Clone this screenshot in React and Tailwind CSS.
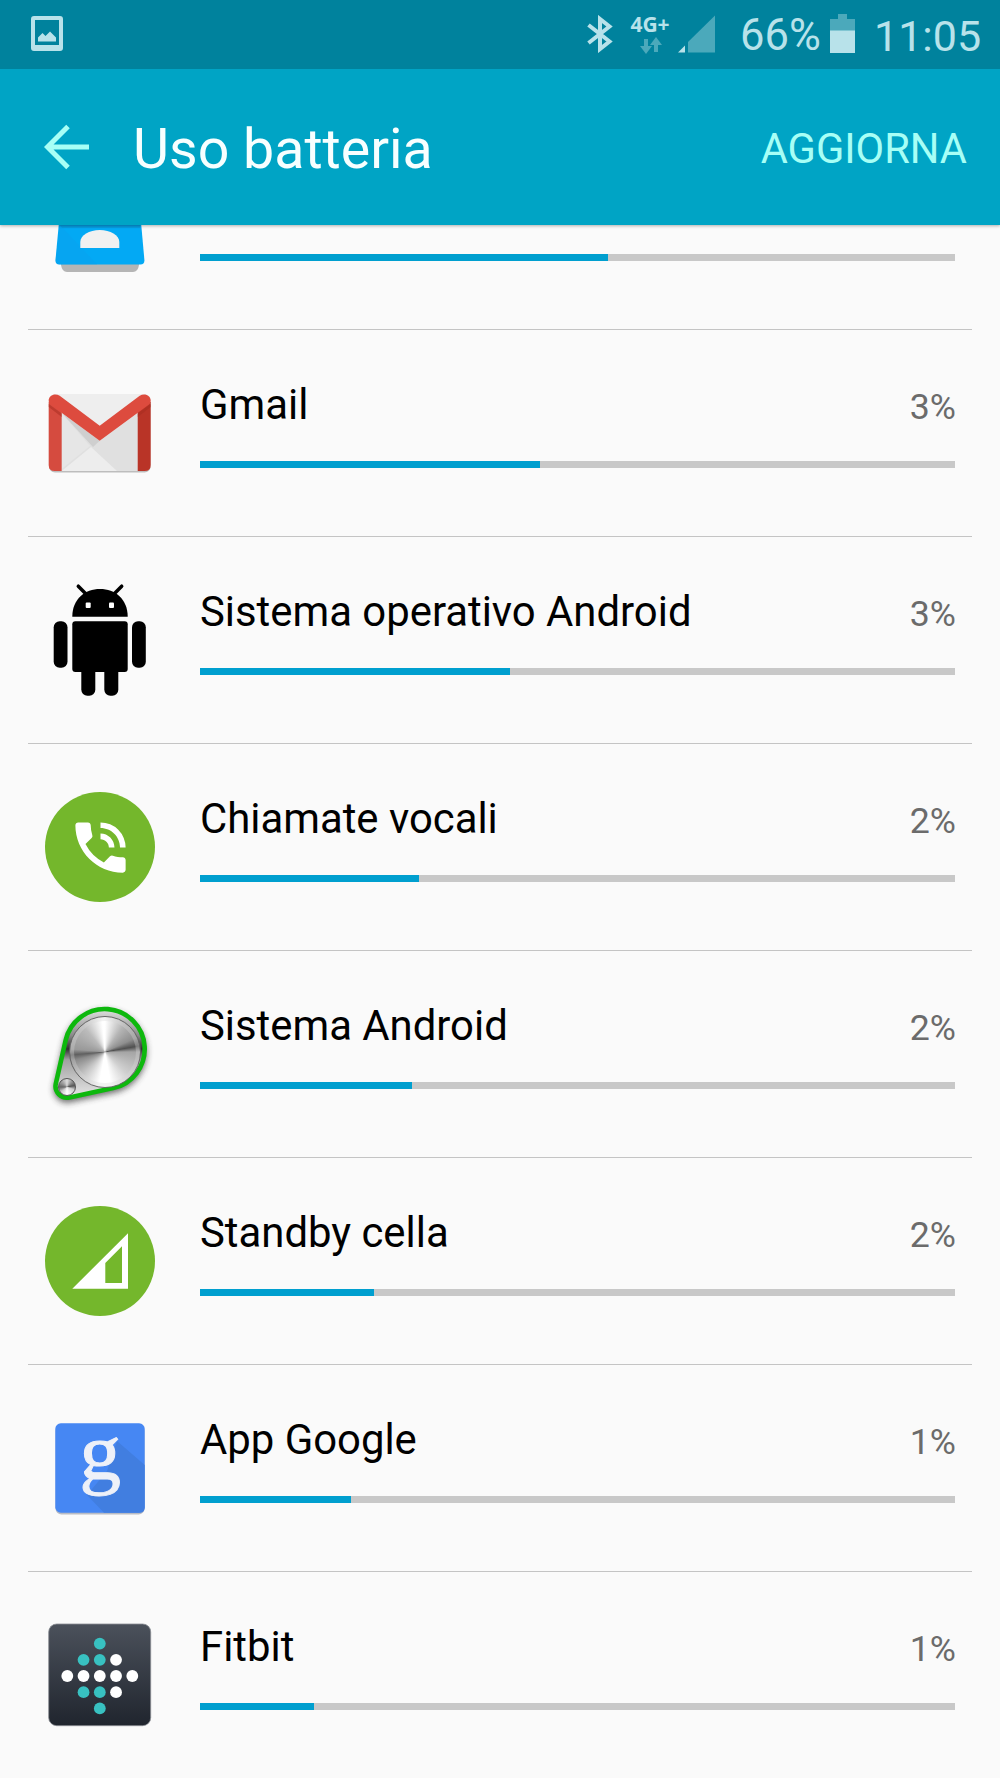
import { MdPhoneInTalk } from 'react-icons/md'

const APPS = [
  { name: '', percent: '', width: 408, Icon: ContactsIcon },
  { name: 'Gmail', percent: '3%', width: 340, Icon: GmailIcon },
  { name: 'Sistema operativo Android', percent: '3%', width: 310, Icon: AndroidIcon },
  { name: 'Chiamate vocali', percent: '2%', width: 219, Icon: CallsIcon },
  { name: 'Sistema Android', percent: '2%', width: 212, Icon: SystemIcon },
  { name: 'Standby cella', percent: '2%', width: 174, Icon: CellIcon },
  { name: 'App Google', percent: '1%', width: 151, Icon: GoogleIcon },
  { name: 'Fitbit', percent: '1%', width: 114, Icon: FitbitIcon },
]

const ICON = 'size-[110px] shrink-0 overflow-visible'

function ContactsIcon() {
  return (
    <svg viewBox="0 0 110 110" className={ICON}>
      <path d="M16 90h78v4q-1 7-6 7H22q-5 0-6-7z" fill="#b5b5b5" />
      <path d="M15 40h80l4.4 49q.3 4.5-4 4.5H14.5q-4.3 0-4-4.5z" fill="#03a9f4" />
      <path d="M15 54L52 93.5H14.5q-4.3 0-4-4.5z" fill="#0e9cec" opacity="0.3" />
      <path d="M15 54H95V57H17z" fill="#0b8fd0" opacity="0.5" />
      <path d="M35.3 77V71c0-7 9-12 19.5-12s19.5 5 19.5 12v6z" fill="#f1f1f1" />
    </svg>
  )
}

function GmailIcon() {
  return (
    <svg viewBox="0 0 110 110" className={ICON}>
      <rect x="4" y="18" width="101.5" height="76.5" rx="6" fill="#bdbdbd" />
      <rect x="3.7" y="16" width="102" height="77" rx="6" fill="#eeeeee" />
      <path d="M16.7 35L54.7 62.7 92.7 35V93H16.7z" fill="#e0e0e0" />
      <path d="M16.7 35L45 68 16.7 91z" fill="#e6e6e6" />
      <path d="M16.7 93L46 69 72 93z" fill="#ededed" />
      <path d="M16.7 35L48 69 54.7 62.7z" fill="#cfcfcf" />
      <path d="M3.7 24H16.7V93H9.7q-6 0-6-6z" fill="#d54b3f" />
      <path d="M92.7 24h13V87q0 6-6 6h-7z" fill="#b93427" />
      <path d="M3.7 26l13 9.5v3.5L3.7 29zM105.7 26l-13 9.5v3.5l13-10z" fill="#a52c20" opacity="0.5" />
      <path d="M3.7 22.5c0-5 6-8 11-4.8L54.7 47.7 94.7 17.7c5-3.2 11-.2 11 4.8 0 2-.8 3.3-2 4.3L54.7 62.7 5.7 26.8c-1.2-1-2-2.3-2-4.3z" fill="#dd4b3e" />
    </svg>
  )
}

function AndroidIcon() {
  return (
    <svg viewBox="0 0 110 110" className={ICON}>
      <path d="M33.3 1.2L41 9M76.7 1.2L69 9" stroke="#000" strokeWidth="3.5" strokeLinecap="round" />
      <path d="M27.3 31.7C27.3 14 40 4 55 4s27.7 10 27.7 27.7z" />
      <rect x="27.3" y="36.3" width="55.4" height="50.7" rx="3" />
      <rect x="8.7" y="36.3" width="13.8" height="46.5" rx="6" />
      <rect x="87" y="36.3" width="13.8" height="46.5" rx="6" />
      <rect x="36.3" y="80" width="14" height="30.7" rx="6" />
      <rect x="59.3" y="80" width="14" height="30.7" rx="6" />
      <rect x="40.7" y="17.5" width="5" height="5.5" rx="1" fill="#fff" />
      <rect x="64" y="17.5" width="5" height="5.5" rx="1" fill="#fff" />
    </svg>
  )
}

function CallsIcon() {
  return (
    <div className="flex size-[110px] shrink-0 items-center justify-center rounded-full bg-[#74b72c]">
      <MdPhoneInTalk className="size-[67px] text-white" />
    </div>
  )
}

function SystemIcon() {
  return (
    <div className="relative size-[110px] shrink-0">
      <svg viewBox="0 0 110 110" className={ICON}>
        <defs>
          <filter id="shade" x="-20%" y="-20%" width="140%" height="150%">
            <feGaussianBlur stdDeviation="3" />
          </filter>
          <linearGradient id="plate" x1="0" y1="0" x2="0" y2="1">
            <stop offset="0" stopColor="#e0e0e0" />
            <stop offset="0.3" stopColor="#8a8a8a" />
            <stop offset="0.45" stopColor="#303030" />
            <stop offset="0.57" stopColor="#a0a0a0" />
            <stop offset="1" stopColor="#e8e8e8" />
          </linearGradient>
          <path id="belt" d="M20.7 41.1A40 40 0 1 1 68.2 89.1L24.4 98.5A11.5 11.5 0 0 1 10.8 84.8z" />
        </defs>
        <use href="#belt" y="3" fill="#333" stroke="#333" strokeWidth="4" opacity="0.7" filter="url(#shade)" />
        <use href="#belt" fill="url(#plate)" stroke="#0db80d" strokeWidth="4.6" />
      </svg>
      <div className="absolute top-[17px] left-[23.7px] size-[72px] rounded-full border-[1.5px] border-[#666] bg-[conic-gradient(#fff_0deg,#b5b5b5_35deg,#8f8f8f_65deg,#505050_80deg,#a5a5a5_90deg,#d0d0d0_135deg,#fff_170deg,#fff_190deg,#c4c4c4_225deg,#8a8a8a_255deg,#606060_265deg,#999_275deg,#bbb_320deg,#fff_355deg)] shadow-[inset_0_0_0_4px_#d8d8d855]" />
      <div className="absolute top-[78.5px] left-[13px] size-[18px] rounded-full border border-[#555] bg-[conic-gradient(#ddd,#555_80deg,#ccc_110deg,#fff_180deg,#ccc_230deg,#666_270deg,#ddd)]" />
    </div>
  )
}

function CellIcon() {
  return (
    <svg viewBox="0 0 110 110" className={ICON}>
      <circle cx="55" cy="55" r="55" fill="#74b72c" />
      <path d="M27.3 82.7L83 27.3V82.7zM60.3 57V77H77V40.3z" fill="#fff" fillRule="evenodd" />
    </svg>
  )
}

function GoogleIcon() {
  return (
    <svg viewBox="0 0 110 110" className={ICON}>
      <rect x="10.5" y="12" width="89" height="89.5" rx="6" fill="#b9bcc4" />
      <rect x="10.3" y="10.3" width="89.4" height="89.4" rx="5.5" fill="#4687f3" />
      <path d="M72 28L99.7 52V94.2q0 5.5-5.5 5.5H59L42 82 62 58z" fill="#417ee0" />
      <text
        x="34.5"
        y="66"
        fontSize="80"
        textLength="41.5"
        lengthAdjust="spacingAndGlyphs"
        fill="#eef1f8"
        stroke="#eef1f8"
        strokeWidth="1"
        className="font-['Liberation_Serif',serif]"
      >
        g
      </text>
    </svg>
  )
}

// column, row, teal
const DOTS = [
  [2, 0, 1],
  [1, 1, 1], [2, 1, 1], [3, 1, 0],
  [0, 2, 0], [1, 2, 0], [2, 2, 0], [3, 2, 0], [4, 2, 0],
  [1, 3, 1], [2, 3, 1], [3, 3, 0],
  [2, 4, 1],
]

function FitbitIcon() {
  return (
    <svg viewBox="0 0 110 110" className={ICON}>
      <defs>
        <linearGradient id="slate" x1="0" y1="0" x2="0" y2="1">
          <stop offset="0" stopColor="#4b515b" />
          <stop offset="1" stopColor="#20252e" />
        </linearGradient>
      </defs>
      <rect x="3.7" y="4" width="102" height="101.7" rx="8" fill="url(#slate)" stroke="#8a8e94" strokeWidth="0.8" />
      {DOTS.map(([col, row, teal]) => (
        <circle
          key={`${col}-${row}`}
          cx={22.3 + col * 16.25}
          cy={23.6 + row * 16.2}
          r="5.9"
          fill={teal ? '#38c1c1' : '#fff'}
        />
      ))}
    </svg>
  )
}

function StatusBar() {
  return (
    <div className="flex h-[69px] items-start bg-[#00829d] text-[#b8e2ea]">
      <svg viewBox="0 0 32 35" className="mt-4 ml-[31px] h-[35px] w-8">
        <path
          d="M3 0H29q3 0 3 3V32q0 3-3 3H3q-3 0-3-3V3q0-3 3-3zM4 4V29H28V4zM7 25.5V21.5L11.5 17 14.5 20 19 15.5 25 21.5V25.5z"
          fill="currentColor"
          fillRule="evenodd"
        />
      </svg>
      <svg viewBox="0 0 26 38" className="mt-[15px] ml-[524px] h-[38px] w-[26px]">
        <path d="M1.5 10L22.5 26.5 13 34V4L22.5 11.5 1.5 28" fill="none" stroke="currentColor" strokeWidth="4" />
      </svg>
      <div className="mt-[13px] ml-[17px] flex w-10 flex-col items-center">
        <span className="font-['Open_Sans',sans-serif] text-[21px] leading-[22px] font-bold">4G+</span>
        <svg viewBox="0 0 22 17" className="mt-[2px] ml-[2px] h-[17px] w-[22px]">
          <path d="M4 2h4v7h4L6 17 0 9h4zM14 15h4V8h4L16 0 10 8h4z" fill="#4ba9bb" />
        </svg>
      </div>
      <svg viewBox="0 0 37 38" className="mt-[15px] ml-2 h-[38px] w-[37px]">
        <path d="M0 37.5L7 30.5V37.5z" fill="currentColor" />
        <path d="M10 37.5V27L37 0.5V37.5z" fill="#4ba9bb" />
      </svg>
      <span className="mt-[10px] ml-[25px] w-[81px] text-[43.5px] leading-[52px]">66%</span>
      <svg viewBox="0 0 25 39" className="mt-[14px] ml-[9px] h-[39px] w-[25px]">
        <path d="M0 5H8V0H17V5H25V17H0z" fill="#4ba9bb" />
        <path d="M0 16.5H25V39H0z" fill="currentColor" />
      </svg>
      <span className="mt-[10px] ml-[19px] text-[43px] leading-[52px]">11:05</span>
    </div>
  )
}

function Header() {
  return (
    <header className="relative z-10 h-[225px] bg-[#00a4c5] shadow-[0_1px_3px_rgba(0,0,0,0.3)]">
      <StatusBar />
      <div className="flex h-[156px] items-center pr-[33px] pl-11">
        <svg viewBox="0 0 46 46" className="mb-[1px] h-[46px] w-[46px]">
          <path d="M24 2.5L3.5 23 24 43.5M3.5 23H45" fill="none" stroke="#a7fff6" strokeWidth="5" />
        </svg>
        <h1 className="mt-[5px] ml-[43px] text-[55.5px] leading-[64px] text-[#f7ffff]">Uso batteria</h1>
        <button className="mt-1 ml-auto text-[41.6px] leading-[50px] text-[#a7fff6]">AGGIORNA</button>
      </div>
    </header>
  )
}

function AppRow({ app }) {
  const { name, percent, width, Icon } = app
  return (
    <li className="mx-7 flex h-[207px] border-b border-[#c4c4c4] pt-12 pl-[17px]">
      <Icon />
      <div className="ml-[45px] w-[755px] pt-[2px]">
        <div className="-mr-[1px] flex h-[50px] items-baseline justify-between">
          <span className="text-[41.85px] leading-[50px] text-black">{name}</span>
          <span className="text-[35.7px] leading-[50px] text-[#6b6b6b]">{percent}</span>
        </div>
        <div className="mt-[31px] h-[7px] bg-[#c8c8c8]">
          <div className="h-full bg-[#009fcf]" style={{ width }} />
        </div>
      </div>
    </li>
  )
}

export default function App() {
  return (
    <div className="h-[1778px] w-[1000px] overflow-hidden bg-[#fafafa] font-[Roboto,sans-serif]">
      <Header />
      <ul className="-mt-[102px]">
        {APPS.map((app) => (
          <AppRow key={app.name} app={app} />
        ))}
      </ul>
    </div>
  )
}
